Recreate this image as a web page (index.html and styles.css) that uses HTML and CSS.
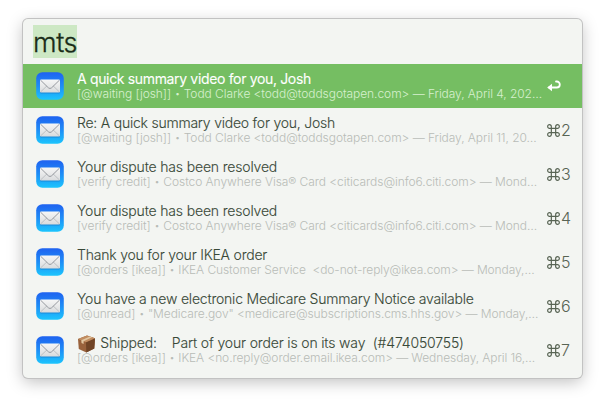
FILE: index.html
```html
<!DOCTYPE html>
<html lang="en">
<head>
<meta charset="utf-8">
<title>Launcher</title>
<link rel="stylesheet" href="styles.css">
</head>
<body>
<svg class="defs" width="0" height="0" aria-hidden="true">
  <defs>
    <linearGradient id="sky" x1="0" y1="0" x2="0" y2="1"><stop offset="0" stop-color="#1f62f0"/><stop offset=".5" stop-color="#1e8df6"/><stop offset="1" stop-color="#1cc5fd"/></linearGradient>
    <linearGradient id="paper" x1="0" y1="0" x2="0" y2="1"><stop offset="0" stop-color="#f6f6f6"/><stop offset="1" stop-color="#d9dbdd"/></linearGradient>
    <symbol id="mail" viewBox="0 0 28 28">
      <rect x=".2" y=".2" width="27.6" height="27.6" rx="6.2" fill="url(#sky)"/>
      <rect x="4" y="8.6" width="20" height="13" rx="1.4" fill="#1560a8" opacity=".4"/>
      <rect x="4" y="7.6" width="20" height="13" rx="1.4" fill="url(#paper)"/>
      <path d="M4.5 20 11 13.8M23.5 20 17 13.8" fill="none" stroke="#b4b7bb" stroke-width=".8"/>
      <path d="M4.6 8.2 12.4 15.8Q14 17.2 15.6 15.8L23.4 8.2" fill="none" stroke="#96999f" stroke-width="1"/>
    </symbol>
    <symbol id="cmd" viewBox="0 0 12 12">
      <path d="M4 4H8V8H4ZM4 4H2.4A1.7 1.7 0 1 1 4 2.4ZM8 4V2.4A1.7 1.7 0 1 1 9.6 4ZM8 8H9.6A1.7 1.7 0 1 1 8 9.6ZM4 8V9.6A1.7 1.7 0 1 1 2.4 8Z" fill="none" stroke="currentColor" stroke-width="1.1"/>
    </symbol>
  </defs>
</svg>
<main class="window">
  <header class="search"><span class="query">mts</span></header>
  <ul class="results">
    <li class="row selected"><svg class="icon"><use href="#mail"/></svg><div class="text"><div class="title t1">A quick summary video for you, Josh</div><div class="sub s1">[@waiting [josh]] <span class="dot">•</span> Todd Clarke &lt;todd@toddsgotapen.com&gt; — Friday, April 4, 202…</div></div><div class="key"><svg class="return" viewBox="0 0 14 12"><path d="M2 7.5H9.8A3 3 0 0 0 9.8 1.5H9" fill="none" stroke="currentColor" stroke-width="1.8" stroke-linecap="round"/><path d="M.2 7.5 5 3.8V11.2Z" fill="currentColor"/></svg></div></li>
    <li class="row"><svg class="icon"><use href="#mail"/></svg><div class="text"><div class="title t2">Re: A quick summary video for you, Josh</div><div class="sub s2">[@waiting [josh]] <span class="dot">•</span> Todd Clarke &lt;todd@toddsgotapen.com&gt; — Friday, April 11, 20…</div></div><div class="key"><svg class="cmd"><use href="#cmd"/></svg>2</div></li>
    <li class="row"><svg class="icon"><use href="#mail"/></svg><div class="text"><div class="title t3">Your dispute has been resolved</div><div class="sub s3">[verify credit] <span class="dot">•</span> Costco Anywhere Visa® Card &lt;citicards@info6.citi.com&gt; — Mond…</div></div><div class="key"><svg class="cmd"><use href="#cmd"/></svg>3</div></li>
    <li class="row"><svg class="icon"><use href="#mail"/></svg><div class="text"><div class="title t3">Your dispute has been resolved</div><div class="sub s3">[verify credit] <span class="dot">•</span> Costco Anywhere Visa® Card &lt;citicards@info6.citi.com&gt; — Mond…</div></div><div class="key"><svg class="cmd"><use href="#cmd"/></svg>4</div></li>
    <li class="row"><svg class="icon"><use href="#mail"/></svg><div class="text"><div class="title t5">Thank you for your IKEA order</div><div class="sub s5">[@orders [ikea]] <span class="dot">•</span> IKEA Customer Service  &lt;do-not-reply@ikea.com&gt; — Monday,…</div></div><div class="key"><svg class="cmd"><use href="#cmd"/></svg>5</div></li>
    <li class="row"><svg class="icon"><use href="#mail"/></svg><div class="text"><div class="title t6">You have a new electronic Medicare Summary Notice available</div><div class="sub s6">[@unread] <span class="dot">•</span> "Medicare.gov" &lt;medicare@subscriptions.cms.hhs.gov&gt; — Monday,…</div></div><div class="key"><svg class="cmd"><use href="#cmd"/></svg>6</div></li>
    <li class="row"><svg class="icon"><use href="#mail"/></svg><div class="text"><div class="title t7"><svg class="box" viewBox="0 0 19 18"><path d="M1 4 10 .5 18 3.3 17.3 13.4 9.3 17.6 1.8 14Z" fill="#99623c"/><path d="M9 7.3 18 3.3 17.3 13.4 9.3 17.6Z" fill="#704426"/><path d="M1 4 10 .5 18 3.3 9 7.3Z" fill="#c18d61"/><path d="M4.3 5.3 13 1.5 15 2.3 6.6 6.2V9L4.5 8.1Z" fill="#e2c7a2"/></svg> Shipped:    Part of your order is on its way  (#474050755)</div><div class="sub s7">[@orders [ikea]] <span class="dot">•</span> IKEA &lt;no.reply@order.email.ikea.com&gt; — Wednesday, April 16,…</div></div><div class="key"><svg class="cmd"><use href="#cmd"/></svg>7</div></li>
  </ul>
</main>
</body>
</html>
```
FILE: styles.css
```css
* { box-sizing: border-box; }
html { background: #fff; }
body {
  margin: 0;
  height: 405px;
  padding: 19px 0 0 23px;
  font-family: Inter, "Liberation Sans", sans-serif;
  font-weight: 300;
}
.defs { position: absolute; }
.window {
  width: 559px;
  height: 359px;
  border-radius: 5px;
  background: #f3f5f2;
  box-shadow: 0 0 0 1px #c2c2c2, 0 4px 16px rgba(0,0,0,.25);
  overflow: hidden;
}
.search { height: 45px; padding: 6px 10px; }
.query {
  display: block;
  width: 44px;
  height: 33px;
  background: #cde8c4;
  color: #192c18;
  font-size: 27px;
  line-height: 36px;
  letter-spacing: -.4px;
  -webkit-text-stroke: .3px;
  white-space: nowrap;
}
.results { margin: 0; padding: 0; list-style: none; }
.row {
  display: flex;
  align-items: center;
  height: 44px;
  padding-left: 13px;
  color: #384837;
}
.icon { width: 28px; height: 28px; flex: none; }
.text { width: 483px; padding-left: 13px; white-space: pre; flex: none; }
.title { height: 16px; font-size: 14px; line-height: 15px; -webkit-text-stroke: .1px; }
.sub { height: 14px; font-size: 12px; line-height: 13px; color: #b8bcb7; }
.dot { display: inline-block; width: 6px; font-size: 9px; line-height: 10px; text-align: center; vertical-align: 1px; }
.t1 { letter-spacing: -.34px; }
.t2 { letter-spacing: -.23px; }
.t3 { letter-spacing: -.17px; }
.t5, .t6 { letter-spacing: -.21px; }
.t7 { letter-spacing: -.16px; }
.s1, .s2, .s3 { letter-spacing: -.06px; }
.s5, .s6, .s7 { letter-spacing: -.09px; }
.key { display: flex; align-items: center; height: 20px; font-size: 16px; line-height: 20px; color: #586454; }
.cmd { width: 13px; height: 13px; margin-right: 1px; }
.return { width: 14px; height: 12px; }
.box { width: 19px; height: 18px; margin: -2px .5px -2px 0; vertical-align: -3px; }
.selected { background: #75be62; color: #fff; }
.selected .title { font-weight: 400; }
.selected .sub { color: #d7f0cf; }
.selected .key { color: #fff; }
```
